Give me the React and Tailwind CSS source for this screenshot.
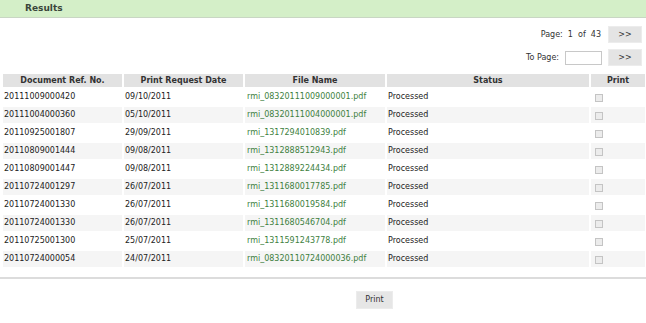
const rows = [
  ['20111009000420', '09/10/2011', 'rmi_08320111009000001.pdf'],
  ['20111004000360', '05/10/2011', 'rmi_08320111004000001.pdf'],
  ['20110925001807', '29/09/2011', 'rmi_1317294010839.pdf'],
  ['20110809001444', '09/08/2011', 'rmi_1312888512943.pdf'],
  ['20110809001447', '09/08/2011', 'rmi_1312889224434.pdf'],
  ['20110724001297', '26/07/2011', 'rmi_1311680017785.pdf'],
  ['20110724001330', '26/07/2011', 'rmi_1311680019584.pdf'],
  ['20110724001330', '26/07/2011', 'rmi_1311680546704.pdf'],
  ['20110725001300', '25/07/2011', 'rmi_1311591243778.pdf'],
  ['20110724000054', '24/07/2011', 'rmi_08320110724000036.pdf'],
];

const NextButton = () => (
  <button className="w-[34px] h-[17px] bg-[#e4e4e4] border border-[#ececec] text-[8px] text-[#333] leading-none">
    &gt;&gt;
  </button>
);

export default function App() {
  return (
    <div className="w-[646px] h-[323px] bg-white text-[8px] text-[#222] font-['DejaVu_Sans',Verdana,sans-serif]">
      {/* title bar */}
      <div className="h-[18px] bg-[#d4efc8] border-b border-[#c9d6c4] flex items-center pl-[25px]">
        <span className="font-bold text-[9px] text-[#3a463a]">Results</span>
      </div>

      {/* paging */}
      <div className="flex flex-col items-end pr-[4px] pt-[8px] gap-[6px]">
        <div className="flex items-center gap-[7px]">
          <span className="text-[#333]">Page:&nbsp; 1&nbsp; of&nbsp; 43</span>
          <NextButton />
        </div>
        <div className="flex items-center gap-[6px]">
          <span className="text-[#333]">To Page:</span>
          <input className="w-[37px] h-[14px] border border-[#c8c8c8] bg-white" />
          <NextButton />
        </div>
      </div>

      {/* results table */}
      <table className="mt-[6px] ml-[1px] border-separate border-spacing-[2px] w-[644px] table-fixed">
        <colgroup>
          <col className="w-[119px]" />
          <col className="w-[119px]" />
          <col className="w-[140px]" />
          <col className="w-[202px]" />
          <col className="w-[54px]" />
        </colgroup>
        <thead>
          <tr className="h-[13px]">
            {['Document Ref. No.', 'Print Request Date', 'File Name', 'Status', 'Print'].map(h => (
              <th key={h} className="bg-[#e2e2e2] font-bold text-[#333] text-center leading-[13px] p-0">{h}</th>
            ))}
          </tr>
        </thead>
        <tbody>
          {rows.map((r, i) => (
            <tr key={i} className="h-[16px]">
              {[r[0], r[1]].map((v, j) => (
                <td key={j} className={`${i % 2 ? 'bg-[#f5f5f5]' : 'bg-white'} pl-[1px] leading-[16px]`}>{v}</td>
              ))}
              <td className={`${i % 2 ? 'bg-[#f5f5f5]' : 'bg-white'} pl-[2px] text-[#3e7f3e]`}>{r[2]}</td>
              <td className={`${i % 2 ? 'bg-[#f5f5f5]' : 'bg-white'} pl-[1px]`}>Processed</td>
              <td className={`${i % 2 ? 'bg-[#f5f5f5]' : 'bg-white'} pl-[4px]`}>
                <div className="w-[8px] h-[8px] border border-[#c4c4c4] bg-[#ececec] mt-[2px]" />
              </td>
            </tr>
          ))}
        </tbody>
      </table>

      <div className="mt-[8px] border-t-2 border-[#dcdcdc]" />

      <div className="flex pt-[12px] pl-[356px]">
        <button className="w-[37px] h-[18px] bg-[#e6e6e6] border border-[#ececec] text-[8px] text-[#333]">Print</button>
      </div>
    </div>
  );
}
